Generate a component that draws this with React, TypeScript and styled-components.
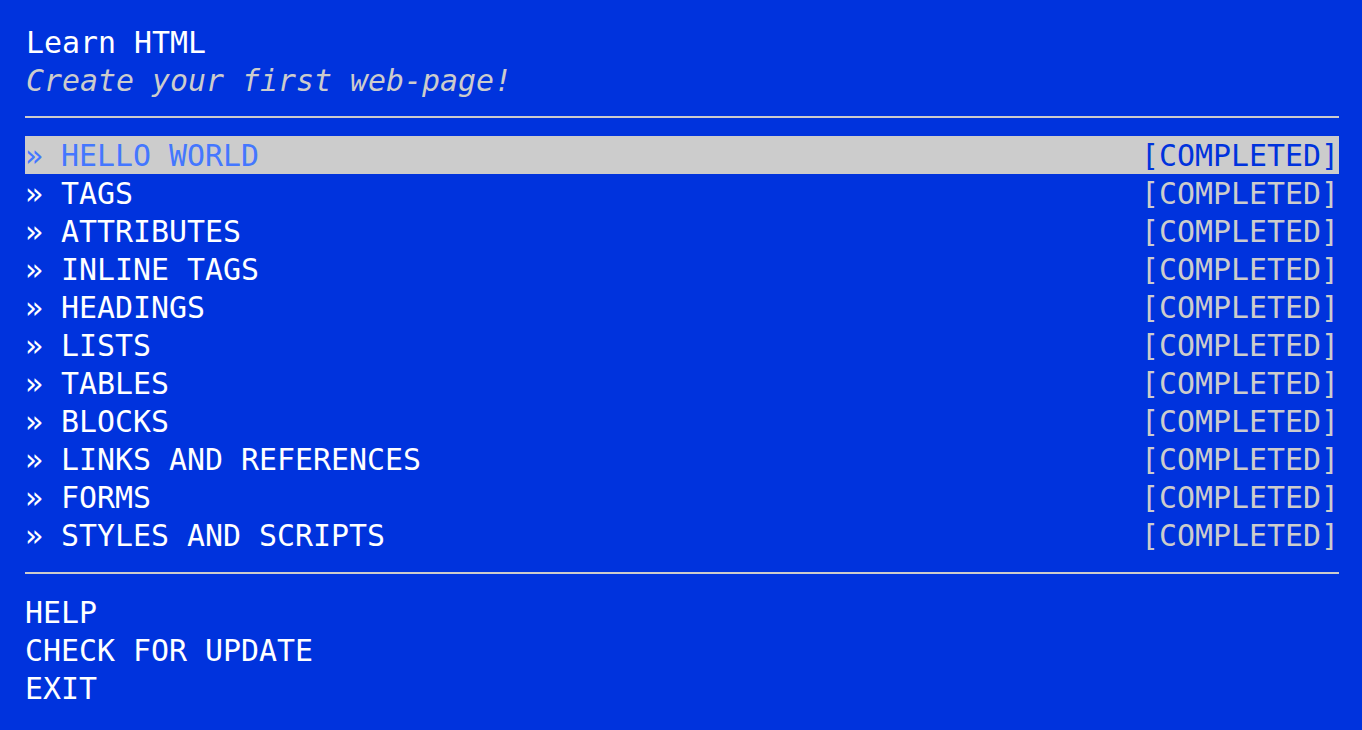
import React from "react";
import styled, { createGlobalStyle } from "styled-components";

const Global = createGlobalStyle`
  html, body {
    margin: 0;
    padding: 0;
    background: #0033dd;
  }
  body {
    font-family: "DejaVu Sans Mono", "Liberation Mono", monospace;
    font-size: 29.9px;
    line-height: 38px;
    color: #ffffff;
  }
`;

const Page = styled.div`
  min-height: 730px;
  box-sizing: border-box;
  padding: 24px 23px 0 25px;
  display: flex;
  flex-direction: column;
`;

const Header = styled.header`
  display: flex;
  flex-direction: column;
  padding-left: 1px;
`;

const Title = styled.div`
  color: #ffffff;
  white-space: pre;
`;

const Subtitle = styled.div`
  color: #cccccc;
  font-style: italic;
  white-space: pre;
`;

const Divider = styled.hr<{ $top: number; $bottom: number }>`
  border: none;
  height: 2px;
  background: #cccccc;
  margin: ${(p) => p.$top}px 0 ${(p) => p.$bottom}px 0;
`;

const Menu = styled.ul`
  list-style: none;
  margin: 0;
  padding: 0;
  display: flex;
  flex-direction: column;
`;

const Row = styled.li<{ $active?: boolean }>`
  display: flex;
  justify-content: space-between;
  box-sizing: border-box;
  height: 38px;
  padding-top: 2px;
  line-height: 36px;
  white-space: pre;
  background: ${(p) => (p.$active ? "#cccccc" : "transparent")};
`;

const Label = styled.span<{ $active?: boolean }>`
  color: ${(p) => (p.$active ? "#4477ff" : "#ffffff")};
`;

const Status = styled.span<{ $active?: boolean }>`
  color: ${(p) => (p.$active ? "#0033dd" : "#cccccc")};
`;

const Footer = styled.ul`
  list-style: none;
  margin: 0;
  padding: 0;
  display: flex;
  flex-direction: column;
`;

const FooterItem = styled.li`
  color: #ffffff;
  white-space: pre;
  box-sizing: border-box;
  height: 38px;
  padding-top: 2px;
  line-height: 36px;
`;

const lessons = [
  "HELLO WORLD",
  "TAGS",
  "ATTRIBUTES",
  "INLINE TAGS",
  "HEADINGS",
  "LISTS",
  "TABLES",
  "BLOCKS",
  "LINKS AND REFERENCES",
  "FORMS",
  "STYLES AND SCRIPTS",
];

export default function App() {
  return (
    <>
      <Global />
      <Page>
        <Header>
          <Title>Learn HTML</Title>
          <Subtitle>Create your first web-page!</Subtitle>
        </Header>
        <Divider $top={16} $bottom={18} />
        <Menu>
          {lessons.map((l, i) => (
            <Row key={l} $active={i === 0}>
              <Label $active={i === 0}>{"» " + l}</Label>
              <Status $active={i === 0}>[COMPLETED]</Status>
            </Row>
          ))}
        </Menu>
        <Divider $top={18} $bottom={19} />
        <Footer>
          <FooterItem>HELP</FooterItem>
          <FooterItem>CHECK FOR UPDATE</FooterItem>
          <FooterItem>EXIT</FooterItem>
        </Footer>
      </Page>
    </>
  );
}
